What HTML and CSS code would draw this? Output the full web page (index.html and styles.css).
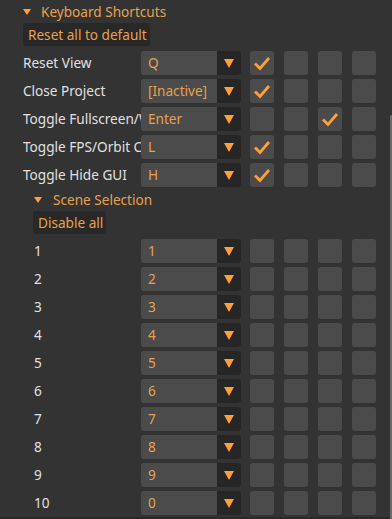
FILE: index.html
```html
<!DOCTYPE html>
<html lang="en">
<head>
    <meta charset="UTF-8">
    <meta name="viewport" content="width=device-width, initial-scale=1.0">
    <title>Keyboard Shortcuts</title>
    <link rel="stylesheet" href="styles.css">
</head>
<body>
    <main class="panel">
        <div class="title">
            <span class="tri"></span>
            <span>Keyboard Shortcuts</span>
        </div>
        <button class="btn">Reset all to default</button>

        <div class="rows">
            <div class="row">
                <span class="label">Reset View</span>
                <div class="select"><span class="value">Q</span><span class="arrow"><i></i></span></div>
                <span class="box on"></span><span class="box"></span><span class="box"></span><span class="box"></span>
            </div>
            <div class="row">
                <span class="label">Close Project</span>
                <div class="select"><span class="value">[Inactive]</span><span class="arrow"><i></i></span></div>
                <span class="box on"></span><span class="box"></span><span class="box"></span><span class="box"></span>
            </div>
            <div class="row">
                <span class="label">Toggle Fullscreen/Windowed</span>
                <div class="select"><span class="value">Enter</span><span class="arrow"><i></i></span></div>
                <span class="box"></span><span class="box"></span><span class="box on"></span><span class="box"></span>
            </div>
            <div class="row">
                <span class="label">Toggle FPS/Orbit Camera</span>
                <div class="select"><span class="value">L</span><span class="arrow"><i></i></span></div>
                <span class="box on"></span><span class="box"></span><span class="box"></span><span class="box"></span>
            </div>
            <div class="row">
                <span class="label">Toggle Hide GUI</span>
                <div class="select"><span class="value">H</span><span class="arrow"><i></i></span></div>
                <span class="box on"></span><span class="box"></span><span class="box"></span><span class="box"></span>
            </div>
        </div>

        <div class="title sub">
            <span class="tri"></span>
            <span>Scene Selection</span>
        </div>
        <button class="btn sub-btn">Disable all</button>

        <div class="rows scenes" id="scenes"></div>
    </main>

    <div class="scrollbar"></div>

    <script>
        var keys = ['1', '2', '3', '4', '5', '6', '7', '8', '9', '0'];
        var scenes = document.getElementById('scenes');
        for (var i = 0; i < keys.length; i++) {
            var row = document.createElement('div');
            row.className = 'row';
            row.innerHTML = '<span class="label">' + (i + 1) + '</span>' +
                '<div class="select"><span class="value">' + keys[i] + '</span><span class="arrow"><i></i></span></div>' +
                '<span class="box"></span><span class="box"></span><span class="box"></span><span class="box"></span>';
            scenes.appendChild(row);
        }
    </script>
</body>
</html>
```

FILE: styles.css
```css
*{
    margin: 0;
    box-sizing: border-box;
}
html, body{
    height: 100%;
    overflow: hidden;
}
body{
    background-color: #333333;
    font-family: "Noto Sans", "Open Sans", sans-serif;
    font-size: 13.6px;
    color: #e0e0e0;
    border-bottom: 2px solid #2a2a2a;
}

.panel{
    padding-left: 23px;
}

.title{
    display: flex;
    align-items: center;
    height: 22px;
    color: #e8a04e;
}
.title .tri{
    width: 0;
    height: 0;
    border-left: 4px solid transparent;
    border-right: 4px solid transparent;
    border-top: 6px solid #ff9f3a;
    margin: 1px 10px 0 0;
}
.title.sub{
    height: 24px;
    padding-left: 11px;
}
.title.sub .tri{
    margin-right: 11px;
}

.btn{
    display: block;
    height: 23px;
    margin-top: 1px;
    padding: 0 3px 1px 5px;
    border: 0;
    border-radius: 3px;
    background-color: #282828;
    color: #e8a04e;
    font-family: inherit;
    font-size: inherit;
}
.sub-btn{
    margin: 0 0 0 10px;
}

.rows{
    display: flex;
    flex-direction: column;
    gap: 4px;
    margin-top: 5px;
}

.row{
    display: flex;
    align-items: center;
    height: 24px;
}
.label{
    width: 118px;
    overflow: hidden;
    white-space: nowrap;
    padding-bottom: 1px;
}
.scenes .label{
    padding-left: 11px;
}

.select{
    display: flex;
    width: 100px;
    height: 24px;
    margin-right: 9px;
    border-radius: 3px;
    background-color: #4b4b4b;
    overflow: hidden;
}
.select .value{
    flex: 1;
    padding: 2px 0 0 7px;
    color: #e8a04e;
    white-space: nowrap;
}
.select .arrow{
    display: flex;
    align-items: center;
    justify-content: center;
    width: 24px;
    background-color: #262626;
}
.select .arrow i{
    width: 0;
    height: 0;
    border-left: 5.5px solid transparent;
    border-right: 5.5px solid transparent;
    border-top: 9px solid #ff9f3a;
}

.box{
    width: 24px;
    height: 24px;
    margin-right: 10px;
    border-radius: 3px;
    background-color: #4b4b4b;
}
.box.on{
    background-image: url("data:image/svg+xml,%3Csvg xmlns='http://www.w3.org/2000/svg' width='24' height='24'%3E%3Cpolyline points='5,12.5 10,17.5 19,7' fill='none' stroke='%23ff9f3a' stroke-width='2.8'/%3E%3C/svg%3E");
}

.scrollbar{
    position: absolute;
    right: 0;
    top: 115px;
    bottom: 0;
    width: 2px;
    border-radius: 1px 1px 0 0;
    background-color: #6b6b6b;
}
```
